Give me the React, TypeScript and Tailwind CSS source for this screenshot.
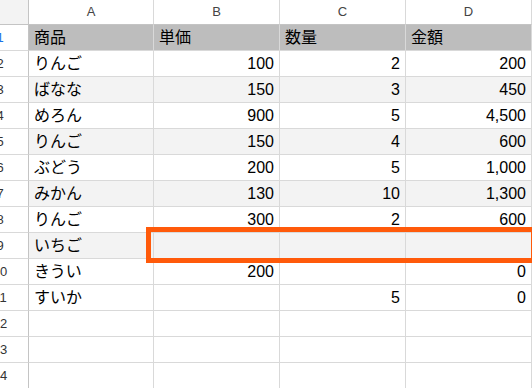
import React from 'react';

type Row = {
  cells: [string, string, string, string];
  tone: 'head' | 'band' | 'plain';
};

const rows: Row[] = [
  { cells: ['商品', '単価', '数量', '金額'], tone: 'head' },
  { cells: ['りんご', '100', '2', '200'], tone: 'plain' },
  { cells: ['ばなな', '150', '3', '450'], tone: 'band' },
  { cells: ['めろん', '900', '5', '4,500'], tone: 'plain' },
  { cells: ['りんご', '150', '4', '600'], tone: 'band' },
  { cells: ['ぶどう', '200', '5', '1,000'], tone: 'plain' },
  { cells: ['みかん', '130', '10', '1,300'], tone: 'band' },
  { cells: ['りんご', '300', '2', '600'], tone: 'plain' },
  { cells: ['いちご', '', '', ''], tone: 'band' },
  { cells: ['きうい', '200', '', '0'], tone: 'plain' },
  { cells: ['すいか', '', '5', '0'], tone: 'plain' },
  { cells: ['', '', '', ''], tone: 'plain' },
  { cells: ['', '', '', ''], tone: 'plain' },
  { cells: ['', '', '', ''], tone: 'plain' },
];

const font = { fontFamily: '"Liberation Sans", "Noto Sans CJK JP", sans-serif' };

export default function App() {
  return (
    <div
      className="relative h-[388px] w-[532px] overflow-hidden bg-white text-black"
      style={font}
    >
      <div className="grid grid-cols-[29px_125px_126px_126px_126px]">
        {/* column letters */}
        <div className="h-[25px] border-b border-r border-[#c4c4c4] bg-[#f3f3f3]" />
        {['A', 'B', 'C', 'D'].map((l) => (
          <div
            key={l}
            className="flex h-[25px] items-center justify-center border-b border-r border-b-[#c4c4c4] border-r-[#d9d9d9] text-[13px] text-[#444]"
          >
            {l}
          </div>
        ))}

        {rows.map((row, i) => {
          const bg =
            row.tone === 'head'
              ? 'bg-[#bdbdbd]'
              : row.tone === 'band'
                ? 'bg-[#f3f3f3]'
                : 'bg-white';
          return (
            <React.Fragment key={i}>
              <div className="flex h-[26px] items-center justify-end overflow-hidden border-b border-r border-b-[#d9d9d9] border-r-[#c4c4c4] bg-white">
                <div
                  className={`w-[56px] shrink-0 text-center text-[13px] ${
                    i === 0 ? 'text-[#1a73e8]' : 'text-[#333]'
                  }`}
                >
                  {i + 1}
                </div>
              </div>
              {row.cells.map((c, j) => (
                <div
                  key={j}
                  className={`flex h-[26px] items-center overflow-hidden whitespace-nowrap border-b border-r border-[#d9d9d9] px-[5px] text-[16px] ${bg} ${
                    j === 0 || row.tone === 'head' ? 'justify-start' : 'justify-end'
                  }`}
                >
                  {c}
                </div>
              ))}
            </React.Fragment>
          );
        })}
      </div>

      {/* selection highlight */}
      <div className="absolute left-[146px] top-[227px] h-[36px] w-[390px] border-[5px] border-[#ff5a0a]" />
    </div>
  );
}
